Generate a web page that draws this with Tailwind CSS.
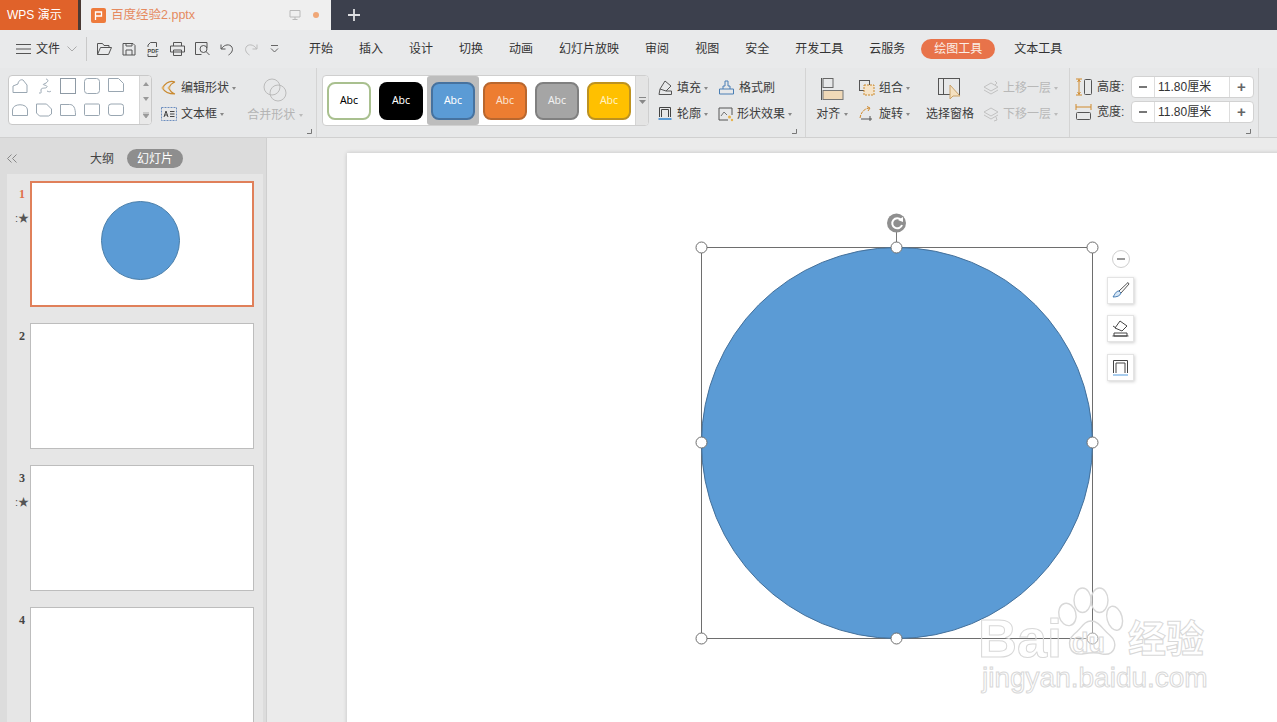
<!DOCTYPE html>
<html lang="zh"><head><meta charset="utf-8"><script src="https://cdn.jsdelivr.net/npm/@tailwindcss/browser@4"></script></head>
<body class="m-0 overflow-hidden">
<div class="w-[1277px] h-[722px] flex flex-col overflow-hidden bg-[#ebebeb] text-[12px] leading-[16px] text-[#444] font-['Liberation_Sans','Noto_Sans_CJK_SC',sans-serif]">

<!-- title bar -->
<div class="h-[30px] shrink-0 flex bg-[#3c404d] items-stretch">
  <div class="w-[78px] bg-[#e0622a] flex items-center pl-[7px] text-white">WPS 演示</div>
  <div class="w-[3px] bg-[#4a3a33]"></div>
  <div class="w-[250px] bg-[#efefef] flex items-center pl-[10px]">
    <svg class="w-[15px] h-[15px]" viewBox="0 0 15 15"><rect x="0" y="0" width="15" height="15" rx="2" fill="#ee7b3c"/><path d="M4.500 12V4h6v4H4.500" fill="none" stroke="#fff" stroke-width="1.300"/></svg>
    <span class="ml-[5px] text-[#e58a5f] text-[12.500px]">百度经验2.pptx</span>
    <svg class="ml-[94px] w-[12px] h-[12px]" viewBox="0 0 12 12"><path d="M1 1.500h10v6.500H1zM6 8v2.500M3.500 10.500h5" fill="none" stroke="#b9b9b9"/></svg>
    <span class="ml-[12px] w-[6px] h-[6px] rounded-full bg-[#f0a777]"></span>
  </div>
  <svg class="ml-[17px] self-center w-[12px] h-[12px]" viewBox="0 0 12 12"><path d="M6 0v12M0 6h12" stroke="#dfe0e3" stroke-width="1.800"/></svg>
</div>

<!-- menu row -->
<div class="h-[38px] shrink-0 flex items-center bg-[#e9eaeb] pl-[16px] text-[#333]">
  <svg class="w-[15px] h-[12px]" viewBox="0 0 15 12"><path d="M0 1.500h15M0 6h15M0 10.500h15" stroke="#555"/></svg>
  <span class="ml-[5px]">文件</span>
  <svg class="ml-[7px] w-[10px] h-[6px]" viewBox="0 0 10 6"><path d="M.5.500 5 5 9.500.500" fill="none" stroke="#aaa"/></svg>
  <div class="ml-[9px] w-px h-[24px] bg-[#c9c9c9]"></div>
  <div class="ml-[10px] flex items-center gap-[10px]">
    <svg class="w-[15px] h-[14px]" viewBox="0 0 15 14"><path d="M.5 12.500V1.500h5l1.500 2h5v2M.5 12.500h11l3-7H3.500z" fill="none" stroke="#555"/></svg>
    <svg class="w-[14px] h-[14px]" viewBox="0 0 14 14"><path d="M1 1.500h10l2 2v9.500H1zM4 13V8h6v5M4 1.500V4h6V1.500" fill="none" stroke="#555"/></svg>
    <svg class="w-[14px] h-[15px]" viewBox="0 0 14 15"><path d="M4.500.500h6V5M4.500.500 2 3v2M2 11.500v3h9v-3" fill="none" stroke="#555"/><rect x="0" y="5.500" width="14" height="6" fill="#e9eaeb"/><text x="7" y="10.500" text-anchor="middle" font-size="5.500" font-weight="700" fill="#444" font-family="Liberation Sans, sans-serif">PDF</text></svg>
    <svg class="w-[15px] h-[14px]" viewBox="0 0 15 14"><path d="M3.500 4V.500h8V4M.5 4h14v6h-14zM3.500 8h8v5.500h-8z" fill="none" stroke="#555"/></svg>
    <svg class="w-[15px] h-[14px]" viewBox="0 0 15 14"><path d="M12 6V.500H.5v12h6" fill="none" stroke="#555"/><circle cx="8.500" cy="7" r="3.500" fill="none" stroke="#555"/><path d="m11 9.500 3.500 3.500" stroke="#555"/></svg>
    <svg class="w-[14px] h-[13px]" viewBox="0 0 14 13"><path d="M1 1.500V6h4.500M1.500 6C3 2.500 8 .5 11 3c3 3 1 7-2.500 9" fill="none" stroke="#555"/></svg>
    <svg class="w-[14px] h-[13px]" viewBox="0 0 14 13"><path d="M13 1.500V6H8.500M12.500 6C11 2.500 6 .5 3 3c-3 3-1 7 2.500 9" fill="none" stroke="#bbb"/></svg>
    <svg class="ml-[2px] w-[9px] h-[8px]" viewBox="0 0 9 8"><path d="M1 .5h7M1 3.500l3.500 3.500L8 3.500" fill="none" stroke="#666"/></svg>
  </div>
  <div class="ml-[30px] flex items-center gap-[26px]">
    <span>开始</span><span>插入</span><span>设计</span><span>切换</span><span>动画</span><span>幻灯片放映</span><span>审阅</span><span>视图</span><span>安全</span><span>开发工具</span><span>云服务</span>
    <span class="ml-[-10px] mr-[-7px] w-[74px] h-[20px] rounded-full bg-[#e8734a] text-[#fbeee6] flex items-center justify-center">绘图工具</span>
    <span>文本工具</span>
  </div>
</div>

<!-- ribbon -->
<div class="h-[70px] shrink-0 flex bg-[#e7e8e9] border-b border-[#d0d0d0] text-[#3c3c3c]">
  <!-- group 1 -->
  <div class="relative w-[317px] shrink-0 border-r border-[#d4d4d4] flex pl-[8px] pt-[7px]">
    <div class="w-[144px] h-[50px] bg-white border border-[#c9c9c9] rounded-[4px] flex overflow-hidden">
      <div class="flex-1 grid grid-cols-[repeat(5,24px)] pl-[2px] pt-[2px] gap-y-[9px] auto-rows-[16px]">
        <svg class="w-[18px] h-[16px]" viewBox="0 0 18 16"><path d="M2 14.500V8l5-2c0-3 3-5 5-4l4 5v7.500z" fill="none" stroke="#9aa7b2"/></svg>
        <svg class="w-[18px] h-[16px]" viewBox="0 0 18 16"><path d="M11 1c4 1 1 4-2 5s4 1 3 3-6 0-6 3 1 3-2 3m8-2c2 1 3 1 4 0" fill="none" stroke="#9aa7b2"/></svg>
        <svg class="w-[18px] h-[16px]" viewBox="0 0 18 16"><rect x="1.500" y=".5" width="15" height="15" fill="none" stroke="#8e9aa5"/></svg>
        <svg class="w-[18px] h-[16px]" viewBox="0 0 18 16"><rect x="1.500" y=".5" width="15" height="15" rx="3" fill="none" stroke="#9aa7b2"/></svg>
        <svg class="w-[18px] h-[16px]" viewBox="0 0 18 16"><path d="M1.500.5h10l5 5v8h-15z" fill="none" stroke="#9aa7b2"/></svg>
        <svg class="w-[18px] h-[16px]" viewBox="0 0 18 16"><path d="M1.500 12.500V7c0-7 15-7 15 0v5.500z" fill="none" stroke="#9aa7b2"/></svg>
        <svg class="w-[18px] h-[16px]" viewBox="0 0 18 16"><path d="M1.500 1h10l5 5v5l-3 2h-9l-3-3z" fill="none" stroke="#9aa7b2"/></svg>
        <svg class="w-[18px] h-[16px]" viewBox="0 0 18 16"><path d="M1.500 12.500v-11h9c4 0 6 3 6 11z" fill="none" stroke="#9aa7b2"/></svg>
        <svg class="w-[18px] h-[16px]" viewBox="0 0 18 16"><rect x="1.500" y="1" width="15" height="11.500" rx="1" fill="none" stroke="#9aa7b2"/></svg>
        <svg class="w-[18px] h-[16px]" viewBox="0 0 18 16"><rect x="1.500" y="1" width="15" height="11.500" rx="2.500" fill="none" stroke="#9aa7b2"/></svg>
      </div>
      <div class="w-[12px] ml-auto border-l border-[#d5d5d5] bg-[#e9e9e9] flex flex-col items-center justify-around text-[#888]">
        <svg class="w-[6px] h-[4px]" viewBox="0 0 6 4"><path d="M3 0 6 4H0z" fill="#999"/></svg>
        <svg class="w-[6px] h-[4px]" viewBox="0 0 6 4"><path d="M3 4 6 0H0z" fill="#999"/></svg>
        <svg class="w-[6px] h-[6px]" viewBox="0 0 6 6"><path d="M0 0h6M3 6 6 2H0z" stroke="#999" stroke-width=".8" fill="#999"/></svg>
      </div>
    </div>
    <div class="ml-[9px] flex flex-col gap-[10px] pt-[5px]">
      <div class="flex items-center gap-[4px]">
        <svg class="w-[16px] h-[16px]" viewBox="0 0 16 16"><path d="M14 2C8 0 4 4 1.500 8c2 4 6 6 12.500 6M14 2c-3 1-5 3-6 6 1 3 3 5 6 6" fill="none" stroke="#c9892f" stroke-width="1.200"/><circle cx="2" cy="8" r="1.400" fill="#e2b36a"/><circle cx="8" cy="8" r="1.400" fill="#e2b36a"/></svg>
        <span>编辑形状</span><span class="ml-[-1px] w-0 h-0 border-x-[2.500px] border-t-[3px] border-x-transparent border-t-[#888]"></span>
      </div>
      <div class="flex items-center gap-[4px]">
        <svg class="w-[16px] h-[16px]" viewBox="0 0 16 16"><rect x=".5" y="1.500" width="15" height="13" fill="none" stroke="#6c8ebf" stroke-dasharray="2 1"/><path d="M3 11 5 5l2 6M3.800 9h2.500M9 5.500h4.500M9 8h4.500M9 10.500h4.500" fill="none" stroke="#444"/></svg>
        <span>文本框</span><span class="ml-[-1px] w-0 h-0 border-x-[2.500px] border-t-[3px] border-x-transparent border-t-[#888]"></span>
      </div>
    </div>
    <div class="ml-[9px] w-[60px] flex flex-col items-center pt-[3px] text-[#b4b4b4]">
      <svg class="w-[24px] h-[24px]" viewBox="0 0 24 24"><circle cx="9" cy="9" r="8" fill="none" stroke="#bbb"/><circle cx="15" cy="15" r="8" fill="none" stroke="#bbb"/></svg>
      <span class="mt-[5px] whitespace-nowrap">合并形状 <span class="inline-block align-middle w-0 h-0 border-x-[2.500px] border-t-[3px] border-x-transparent border-t-[#bbb]"></span></span>
    </div>
    <svg class="absolute right-[4px] bottom-[3px] w-[5px] h-[5px]" viewBox="0 0 5 5"><path d="M4.500 0v4.500H0" fill="none" stroke="#777"/></svg>
  </div>

  <!-- group 2 -->
  <div class="relative w-[489px] shrink-0 border-r border-[#d4d4d4] flex pl-[5px] pt-[7px]">
    <div class="w-[327px] h-[51px] bg-white border border-[#cfcfcf] rounded-[4px] flex overflow-hidden">
      <div class="flex-1 flex items-center pl-[4px] gap-[8px] text-[10.500px] leading-none font-['Noto_Sans',sans-serif]">
        <div class="w-[44px] h-[38px] rounded-[8px] border-2 border-[#a9c08f] bg-white text-black flex items-center justify-center">Abc</div>
        <div class="w-[44px] h-[38px] rounded-[8px] bg-black text-white flex items-center justify-center">Abc</div>
        <div class="w-[52px] h-[49px] mx-[-4px] rounded-[3px] bg-[#bdbdbd] flex items-center justify-center"><div class="w-[44px] h-[38px] rounded-[8px] border-2 border-[#46729f] bg-[#5b9bd5] text-white flex items-center justify-center">Abc</div></div>
        <div class="w-[44px] h-[38px] rounded-[8px] border-2 border-[#b9672e] bg-[#ed7d31] text-[#fbe3d2] flex items-center justify-center">Abc</div>
        <div class="w-[44px] h-[38px] rounded-[8px] border-2 border-[#808080] bg-[#a5a5a5] text-[#f2f2f2] flex items-center justify-center">Abc</div>
        <div class="w-[44px] h-[38px] rounded-[8px] border-2 border-[#bd9220] bg-[#ffc000] text-[#fff2c4] flex items-center justify-center">Abc</div>
      </div>
      <div class="w-[13px] bg-[#e4e4e4] border-l border-[#d5d5d5] flex items-center justify-center">
        <svg class="w-[7px] h-[7px]" viewBox="0 0 7 7"><path d="M0 .5h7" stroke="#888"/><path d="M0 3h7L3.500 7z" fill="#888"/></svg>
      </div>
    </div>
    <div class="ml-[8px] flex flex-col gap-[10px] pt-[5px]">
      <div class="flex items-center gap-[4px]">
        <svg class="w-[16px] h-[16px]" viewBox="0 0 16 16"><path d="m8 1 6 5-5 5-6-2zM2 14.500h12.500M9 11h5.500v3.500M3 9l-1 5.500" fill="none" stroke="#555"/></svg>
        <span>填充</span><span class="ml-[-1px] w-0 h-0 border-x-[2.500px] border-t-[3px] border-x-transparent border-t-[#888]"></span>
      </div>
      <div class="flex items-center gap-[4px]">
        <svg class="w-[16px] h-[16px]" viewBox="0 0 16 16"><path d="M2.500 11V1.500h11V11M4.500 11V3.500h7V11" fill="none" stroke="#444"/><path d="M1.500 13h13" stroke="#5b9bd5" stroke-width="2"/></svg>
        <span>轮廓</span><span class="ml-[-1px] w-0 h-0 border-x-[2.500px] border-t-[3px] border-x-transparent border-t-[#888]"></span>
      </div>
    </div>
    <div class="ml-[11px] flex flex-col gap-[10px] pt-[5px]">
      <div class="flex items-center gap-[5px]">
        <svg class="w-[15px] h-[16px]" viewBox="0 0 15 16"><path d="M.5 9h14v5H.5zM4 9V6h2V1h3v5h2v3" fill="none" stroke="#4a7fb5"/></svg>
        <span>格式刷</span>
      </div>
      <div class="flex items-center gap-[3px] ml-[-1px]">
        <svg class="w-[16px] h-[16px]" viewBox="0 0 16 16"><path d="M10 14H1V2h13v7" fill="none" stroke="#555"/><path d="m3 10 3-4 3 3" fill="none" stroke="#777"/><circle cx="11.500" cy="11" r="1.500" fill="#e6b34d"/><circle cx="14" cy="14" r="1.200" fill="#e6b34d"/></svg>
        <span>形状效果</span><span class="w-0 h-0 border-x-[2.500px] border-t-[3px] border-x-transparent border-t-[#888]"></span>
      </div>
    </div>
    <svg class="absolute right-[8px] bottom-[3px] w-[5px] h-[5px]" viewBox="0 0 5 5"><path d="M4.500 0v4.500H0" fill="none" stroke="#777"/></svg>
  </div>

  <!-- group 3 -->
  <div class="w-[264px] shrink-0 border-r border-[#d4d4d4] flex pl-[8px] pt-[9px]">
    <div class="w-[36px] flex flex-col items-center">
      <svg class="w-[24px] h-[24px]" viewBox="0 0 24 24"><path d="M1.500 1v22" stroke="#555"/><rect x="3" y="1.500" width="10" height="9" fill="none" stroke="#666"/><rect x="3" y="13.500" width="20" height="9" fill="#f0d9b8" stroke="#777"/></svg>
      <span class="mt-[5px] whitespace-nowrap">对齐 <span class="inline-block align-middle w-0 h-0 border-x-[2.500px] border-t-[3px] border-x-transparent border-t-[#888]"></span></span>
    </div>
    <div class="ml-[9px] w-[60px] flex flex-col gap-[10px] pt-[3px]">
      <div class="flex items-center gap-[4px]">
        <svg class="w-[16px] h-[16px]" viewBox="0 0 16 16"><rect x=".5" y=".5" width="10" height="10" fill="none" stroke="#555"/><rect x="5" y="5" width="10" height="10" fill="#f5e3c8" stroke="#c9892f" stroke-dasharray="2 1"/></svg>
        <span>组合</span><span class="ml-[-1px] w-0 h-0 border-x-[2.500px] border-t-[3px] border-x-transparent border-t-[#888]"></span>
      </div>
      <div class="flex items-center gap-[4px]">
        <svg class="w-[16px] h-[16px]" viewBox="0 0 16 16"><path d="M1 12C2 6 5 3 10 2" fill="none" stroke="#d08a2d" stroke-dasharray="3 1"/><path d="M8 .5 11 2 9 5" fill="none" stroke="#d08a2d"/><path d="M2 13h11M11 10v5" stroke="#555"/></svg>
        <span>旋转</span><span class="ml-[-1px] w-0 h-0 border-x-[2.500px] border-t-[3px] border-x-transparent border-t-[#888]"></span>
      </div>
    </div>
    <div class="ml-[6px] w-[50px] flex flex-col items-center">
      <svg class="w-[24px] h-[24px]" viewBox="0 0 24 24"><rect x=".5" y="1.500" width="21" height="16" fill="none" stroke="#555"/><path d="M5.500 1.500v16" stroke="#555"/><path d="M12 8v14l3-3h7z" fill="#f4e0c0" stroke="#c9a169"/></svg>
      <span class="mt-[5px] whitespace-nowrap">选择窗格</span>
    </div>
    <div class="ml-[8px] flex flex-col gap-[10px] pt-[3px] text-[#b8b8b8]">
      <div class="flex items-center gap-[3px]">
        <svg class="w-[17px] h-[16px]" viewBox="0 0 17 16"><path d="m1 7 7-4 7 4-7 4zM1 10l7 4 7-4M12 1l2 2-2 2" fill="none" stroke="#c2c2c2"/></svg>
        <span>上移一层</span><span class="w-0 h-0 border-x-[2.500px] border-t-[3px] border-x-transparent border-t-[#bbb]"></span>
      </div>
      <div class="flex items-center gap-[3px]">
        <svg class="w-[17px] h-[16px]" viewBox="0 0 17 16"><path d="m1 6 7-4 7 4-7 4zM1 9l7 4 7-4M13 11l1 3-3 1" fill="none" stroke="#c2c2c2"/></svg>
        <span>下移一层</span><span class="w-0 h-0 border-x-[2.500px] border-t-[3px] border-x-transparent border-t-[#bbb]"></span>
      </div>
    </div>
  </div>

  <!-- group 4 -->
  <div class="relative w-[189px] shrink-0 border-r border-[#d4d4d4] pl-[5px] pt-[8px] flex flex-col gap-[3px]">
    <div class="flex items-center h-[22px]">
      <svg class="w-[17px] h-[18px]" viewBox="0 0 17 18"><path d="M4 1v16M1 1h6M1 17h6" stroke="#d08a2d"/><path d="m2.500 4 1.500-2 1.500 2M2.500 14 4 16l1.500-2" fill="none" stroke="#d08a2d"/><rect x="9.500" y="1.500" width="7" height="15" rx="1" fill="none" stroke="#555"/></svg>
      <span class="ml-[5px] w-[34px]">高度:</span>
      <div class="w-[123px] h-[22px] bg-white border border-[#d2d2d2] rounded-[4px] flex items-center">
        <span class="w-[22px] flex justify-center"><span class="w-[8px] h-[2px] bg-[#777]"></span></span><span class="flex-1 border-x border-[#ddd] pl-[3px] leading-[20px] text-[#333]">11.80厘米</span><span class="w-[23px] text-center text-[#666] font-bold text-[15px]">+</span>
      </div>
    </div>
    <div class="flex items-center h-[22px]">
      <svg class="w-[17px] h-[18px]" viewBox="0 0 17 18"><path d="M1 1v6M16 1v6M1 4h15" stroke="#d08a2d"/><rect x="1.500" y="9.500" width="14" height="7" rx="1" fill="none" stroke="#555"/></svg>
      <span class="ml-[5px] w-[34px]">宽度:</span>
      <div class="w-[123px] h-[22px] bg-white border border-[#d2d2d2] rounded-[4px] flex items-center">
        <span class="w-[22px] flex justify-center"><span class="w-[8px] h-[2px] bg-[#777]"></span></span><span class="flex-1 border-x border-[#ddd] pl-[3px] leading-[20px] text-[#333]">11.80厘米</span><span class="w-[23px] text-center text-[#666] font-bold text-[15px]">+</span>
      </div>
    </div>
    <svg class="absolute right-[7px] bottom-[3px] w-[5px] h-[5px]" viewBox="0 0 5 5"><path d="M4.500 0v4.500H0" fill="none" stroke="#777"/></svg>
  </div>
</div>

<!-- body -->
<div class="flex-1 flex min-h-0">
  <!-- side panel -->
  <div class="w-[267px] shrink-0 bg-[#dcdcdc] border-r border-[#cfcfcf] flex flex-col">
    <div class="h-[36px] shrink-0 flex items-center pl-[7px] pt-[5px]">
      <svg class="w-[10px] h-[9px]" viewBox="0 0 10 9"><path d="M4.500.5.500 4.500l4 4M9.500.5l-4 4 4 4" fill="none" stroke="#888"/></svg>
      <span class="ml-[73px] text-[#444]">大纲</span>
      <span class="ml-[13px] w-[56px] h-[19px] rounded-full bg-[#8e8e8e] text-white flex items-center justify-center">幻灯片</span>
    </div>
    <div class="ml-[7px] mr-[3px] flex-1 bg-[#e6e6e6] pt-[7px] pl-[23px] flex flex-col gap-[16px] overflow-hidden">
      <div class="relative w-[224px] h-[126px] shrink-0 bg-white border-2 border-[#e0805a] flex justify-center pt-[18px]">
        <span class="absolute left-[-13px] top-[3px] text-[12px] font-bold text-[#e0704a] font-['Liberation_Serif',serif]">1</span>
        <span class="absolute left-[-17px] top-[27px] text-[11px] leading-[16px] text-[#555]">:★</span>
        <div class="w-[79px] h-[79px] rounded-full bg-[#5b9bd5] border border-[#4a7ea9] ml-[-3px]"></div>
      </div>
      <div class="relative w-[224px] h-[126px] shrink-0 bg-white border border-[#bdbdbd]">
        <span class="absolute left-[-12px] top-[4px] text-[12px] font-bold text-[#444] font-['Liberation_Serif',serif]">2</span>
      </div>
      <div class="relative w-[224px] h-[126px] shrink-0 bg-white border border-[#bdbdbd]">
        <span class="absolute left-[-12px] top-[4px] text-[12px] font-bold text-[#444] font-['Liberation_Serif',serif]">3</span>
        <span class="absolute left-[-16px] top-[28px] text-[11px] leading-[16px] text-[#555]">:★</span>
      </div>
      <div class="relative w-[224px] h-[126px] shrink-0 bg-white border border-[#bdbdbd]">
        <span class="absolute left-[-12px] top-[4px] text-[12px] font-bold text-[#444] font-['Liberation_Serif',serif]">4</span>
      </div>
    </div>
  </div>

  <!-- canvas -->
  <div class="flex-1 min-w-0 pl-[80px] pt-[15px] overflow-hidden">
    <div class="relative w-[1000px] h-[700px] bg-white shadow-[0_0_4px_rgba(0,0,0,0.18)]">
      <!-- selected shape: coordinates on the slide -->
      <svg class="absolute left-[340px] top-[55px] w-[420px] h-[450px]" viewBox="0 0 420 450">
        <rect x="14.500" y="39.500" width="391" height="391" fill="none" stroke="#6e6e6e"/>
        <circle cx="210" cy="235" r="195.500" fill="#5b9bd5" stroke="#44709a"/>
        <path d="M209.500 15v24" stroke="#777"/>
        <circle cx="209.500" cy="15" r="9.500" fill="#8f8f8f"/>
        <path d="M214 12a5 5 0 1 0 1 5" fill="none" stroke="#fff" stroke-width="2"/><path d="m211 12 5-3v5z" fill="#fff"/>
        <g fill="#fff" stroke="#6e6e6e">
          <circle cx="14.500" cy="39.500" r="5.500"/><circle cx="209.500" cy="39.500" r="5.500"/><circle cx="405.500" cy="39.500" r="5.500"/>
          <circle cx="14.500" cy="234.500" r="5.500"/><circle cx="405.500" cy="234.500" r="5.500"/>
          <circle cx="14.500" cy="430.500" r="5.500"/><circle cx="209.500" cy="430.500" r="5.500"/><circle cx="405.500" cy="430.500" r="5.500"/>
        </g>
      </svg>
      <!-- floating tools -->
      <div class="absolute left-[760px] top-[97px] w-[27px] flex flex-col items-center">
        <div class="w-[18px] h-[18px] rounded-full border border-[#cfcfcf] bg-white flex items-center justify-center"><div class="w-[8px] h-[2px] bg-[#999]"></div></div>
        <div class="mt-[9px] w-[27px] h-[27px] bg-white border border-[#e4e4e4] shadow-[1px_1px_3px_rgba(0,0,0,0.18)] flex items-center justify-center">
          <svg class="w-[19px] h-[19px]" viewBox="0 0 19 19"><path d="M17 1.500 8 10l2 2 8-9z" fill="none" stroke="#555"/><path d="M8 10c-3 0-4 3-6 6 4 0 7-1 8-4z" fill="#d6e6f5" stroke="#4a7fb5"/></svg>
        </div>
        <div class="mt-[11px] w-[27px] h-[27px] bg-white border border-[#e4e4e4] shadow-[1px_1px_3px_rgba(0,0,0,0.18)] flex items-center justify-center">
          <svg class="w-[19px] h-[19px]" viewBox="0 0 19 19"><path d="m9 2 7 5-5 5-7-3zM1.500 17h16M3 14h13v3H3zM5 9 2 7" fill="none" stroke="#444"/></svg>
        </div>
        <div class="mt-[12px] w-[27px] h-[27px] bg-white border border-[#e4e4e4] shadow-[1px_1px_3px_rgba(0,0,0,0.18)] flex items-center justify-center">
          <svg class="w-[19px] h-[19px]" viewBox="0 0 19 19"><path d="M2.500 15V2.500h14V15M5 15V5h9v10" fill="none" stroke="#444"/><path d="M2 17h15" stroke="#8dbde8" stroke-width="1.500"/></svg>
        </div>
      </div>
    </div>
  </div>
</div>
</div>

<!-- Baidu watermark laid over the window -->
<div class="absolute left-[978px] top-[584px] w-[240px] h-[115px] font-['Liberation_Sans','Noto_Sans_CJK_SC',sans-serif]">
  <svg class="absolute left-[79px] top-[1px] w-[68px] h-[74px]" viewBox="0 0 72 74" fill="rgba(255,255,255,.35)" stroke="#d8d8d8" stroke-width="1.500">
    <ellipse cx="11" cy="29" rx="9" ry="12" transform="rotate(-15 11 29)"/><ellipse cx="27" cy="14" rx="9" ry="13"/><ellipse cx="45" cy="14" rx="9" ry="13"/><ellipse cx="61" cy="33" rx="8" ry="13" transform="rotate(-15 61 33)"/>
    <path d="M36 36c-8 0-10 8-18 14-8 7-6 22 8 21 6-1 14-3 22 0 14 2 17-12 8-20-8-6-11-15-20-15z"/>
  </svg>
  <span class="absolute left-[0px] top-[32px] text-[54px] leading-[44px] font-bold text-transparent [-webkit-text-stroke:1px_#d8d8d8]">Bai</span>
  <span class="absolute left-[94px] top-[44px] text-[27px] leading-[30px] font-bold text-transparent [-webkit-text-stroke:1px_#d8d8d8]">du</span>
  <span class="absolute left-[150px] top-[32px] text-[38px] leading-[46px] font-bold text-transparent [-webkit-text-stroke:1px_#d8d8d8]">经验</span>
  <span class="absolute left-[4px] top-[79px] text-[28px] leading-[30px] text-transparent [-webkit-text-stroke:1px_#d8d8d8]">jingyan.baidu.com</span>
</div>
</body></html>
